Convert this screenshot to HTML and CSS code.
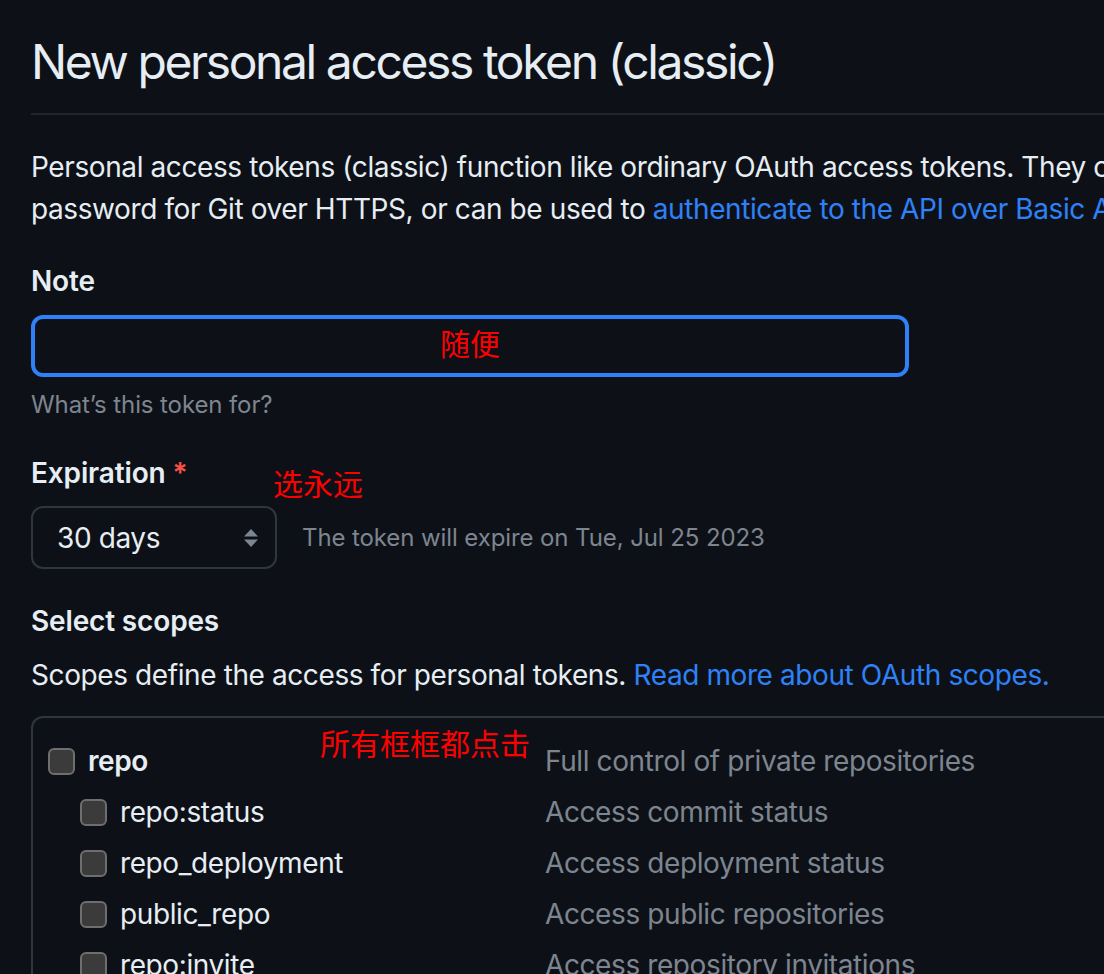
FILE: index.html
```html
<!DOCTYPE html>
<html lang="en">
<head>
<meta charset="utf-8">
<title>New personal access token (classic)</title>
<link rel="stylesheet" href="styles.css">
</head>
<body>
<main class="page">
  <div class="subhead">
    <h2 class="subhead-heading">New personal access token (classic)</h2>
  </div>
  <p class="intro">Personal access tokens (classic) function like ordinary OAuth access tokens. They can be used instead of a<br>password for Git over HTTPS, or can be used to <a href="#" class="link">authenticate to the API over Basic Authentication</a>.</p>

  <div class="form-group">
    <label class="label">Note</label>
    <div class="text-input"><span class="annot">随便</span></div>
    <p class="note">What’s this token for?</p>
  </div>

  <div class="form-group expiration">
    <label class="label">Expiration <span class="required">*</span><span class="annot annot-expire">选永远</span></label>
    <div class="expire-row">
      <div class="select">
        <span>30 days</span>
        <svg class="select-arrows" width="14" height="18" viewBox="0 0 14 18"><path d="M7 0 L14 7.5 H0 Z M0 10.5 H14 L7 18 Z" fill="#7d8590"/></svg>
      </div>
      <span class="note">The token will expire on Tue, Jul 25 2023</span>
    </div>
  </div>

  <div class="scopes">
    <h3 class="label">Select scopes</h3>
    <p class="scopes-desc">Scopes define the access for personal tokens. <a href="#" class="link">Read more about OAuth scopes.</a></p>
    <div class="scope-box">
      <span class="annot annot-all">所有框框都点击</span>
      <div class="scope-row parent">
        <label class="scope-name"><input type="checkbox" class="cb"><span class="strong">repo</span></label>
        <span class="scope-desc">Full control of private repositories</span>
      </div>
      <div class="scope-row child">
        <label class="scope-name"><input type="checkbox" class="cb"><span>repo:status</span></label>
        <span class="scope-desc">Access commit status</span>
      </div>
      <div class="scope-row child">
        <label class="scope-name"><input type="checkbox" class="cb"><span>repo_deployment</span></label>
        <span class="scope-desc">Access deployment status</span>
      </div>
      <div class="scope-row child">
        <label class="scope-name"><input type="checkbox" class="cb"><span>public_repo</span></label>
        <span class="scope-desc">Access public repositories</span>
      </div>
      <div class="scope-row child">
        <label class="scope-name"><input type="checkbox" class="cb"><span>repo:invite</span></label>
        <span class="scope-desc">Access repository invitations</span>
      </div>
      <div class="scope-row child">
        <label class="scope-name"><input type="checkbox" class="cb"><span>security_events</span></label>
        <span class="scope-desc">Read and write security events</span>
      </div>
    </div>
  </div>
</main>
</body>
</html>
```

FILE: styles.css
```css
html, body {
  margin: 0;
  padding: 0;
  background: #0d1117;
  overflow: hidden;
}
body {
  font-family: Inter, "Noto Sans", "Liberation Sans", "Noto Sans CJK SC", sans-serif;
  color: #e6edf3;
  font-size: 28px;
  line-height: 42px;
  letter-spacing: -0.4px;
}
.page {
  width: 1600px;
  padding: 26px 0 0 31px;
}
.subhead {
  border-bottom: 2px solid #21262d;
  padding-bottom: 15px;
}
.subhead-heading {
  margin: 0;
  font-size: 48px;
  line-height: 72px;
  font-weight: 400;
  letter-spacing: -2.4px;
}
.intro {
  margin: 31px 0 0;
  white-space: nowrap;
}
.link {
  color: #2f81f7;
  text-decoration: none;
}
.form-group {
  margin-top: 30px;
}
.label {
  display: block;
  margin: 0;
  font-size: 28px;
  line-height: 42px;
  font-weight: 600;
  letter-spacing: -0.15px;
  position: relative;
}
.required {
  color: #f85149;
}
.text-input {
  margin-top: 13px;
  width: 878px;
  height: 62px;
  box-sizing: border-box;
  border: 4px solid #2f81f7;
  border-radius: 12px;
  padding-bottom: 8px;
  display: flex;
  align-items: center;
  justify-content: center;
}
.annot {
  font-family: "Noto Sans CJK SC", sans-serif;
  color: #ff0000;
  font-size: 30px;
  line-height: 40px;
  font-weight: 400;
  letter-spacing: 0;
}
.note {
  margin: 10px 0 0;
  color: #7d8590;
  font-size: 24px;
  line-height: 36px;
  letter-spacing: -0.1px;
}
.expiration {
  margin-top: 29px;
}
.annot-expire {
  position: absolute;
  left: 242px;
  top: 10px;
}
.expire-row {
  margin-top: 12px;
  display: flex;
  align-items: center;
  gap: 25px;
}
.expire-row .note {
  margin: 0;
}
.select {
  width: 246px;
  height: 63px;
  box-sizing: border-box;
  border: 2px solid #30363d;
  border-radius: 12px;
  display: flex;
  align-items: center;
  justify-content: space-between;
  padding: 0 17px 0 24px;
}
.scopes {
  margin-top: 31px;
}
.scopes-desc {
  margin: 12px 0 0;
}
.scope-box {
  position: relative;
  margin-top: 20px;
  border: 2px solid #30363d;
  border-radius: 12px;
  padding: 17px 0 0 15px;
  width: 1400px;
}
.annot-all {
  position: absolute;
  left: 287px;
  top: 4px;
}
.scope-row {
  display: grid;
  grid-template-columns: 497px 1fr;
  align-items: center;
  height: 51px;
}
.scope-name {
  display: flex;
  align-items: center;
  gap: 13px;
}
.child .scope-name {
  padding-left: 32px;
}
.strong {
  font-weight: 600;
}
.cb {
  appearance: none;
  -webkit-appearance: none;
  margin: 2px 0 0;
  width: 27px;
  height: 27px;
  box-sizing: border-box;
  background: #3b3b3b;
  border: 2px solid #6e6e6e;
  border-radius: 6px;
}
.scope-desc {
  color: #7d8590;
}
```
